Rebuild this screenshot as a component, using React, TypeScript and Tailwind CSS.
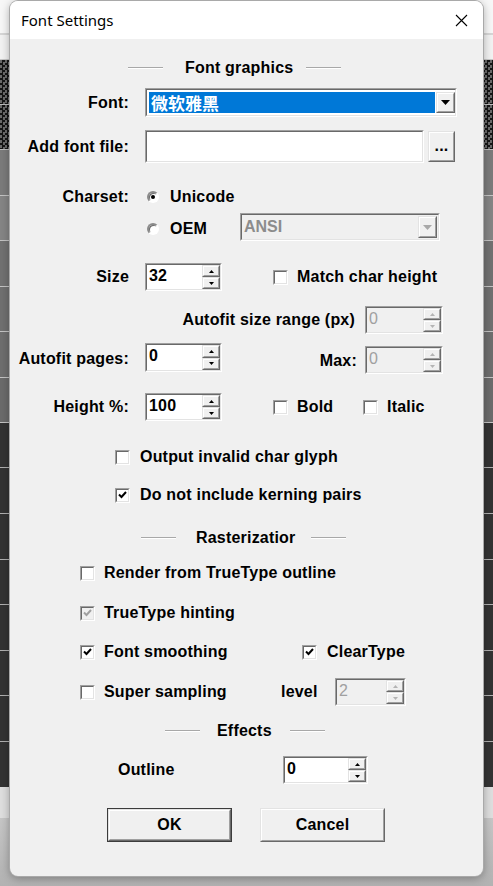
import React from 'react';

const txt = "font-['Liberation_Sans',Arial,sans-serif] font-bold text-[16px] tracking-[0.2px] text-black leading-none whitespace-nowrap";

type Box = { className?: string; inner?: string; children?: React.ReactNode };

function Sunken({ className = '', inner = '', children }: Box) {
  return (
    <div className={`shrink-0 border border-t-[#a0a0a0] border-l-[#a0a0a0] border-b-white border-r-white ${className}`}>
      <div className={`h-full w-full border border-t-[#696969] border-l-[#696969] border-b-[#e3e3e3] border-r-[#e3e3e3] ${inner}`}>
        {children}
      </div>
    </div>
  );
}

function Raised({ className = '', inner = '', children }: Box) {
  return (
    <div className={`shrink-0 border border-t-[#e3e3e3] border-l-[#e3e3e3] border-b-[#696969] border-r-[#696969] bg-[#f0f0f0] ${className}`}>
      <div className={`flex h-full w-full items-center justify-center border border-t-white border-l-white border-b-[#a0a0a0] border-r-[#a0a0a0] ${inner}`}>
        {children}
      </div>
    </div>
  );
}

function Tri({ up = false, big = false, color = '#000' }: { up?: boolean; big?: boolean; color?: string }) {
  if (big) {
    return (
      <svg width="9" height="5" viewBox="0 0 9 5">
        <path d="M0 0 H9 L4.5 5 Z" fill={color} />
      </svg>
    );
  }
  return (
    <svg width="5" height="3" viewBox="0 0 5 3">
      <path d={up ? 'M2.5 0 L5 3 H0 Z' : 'M0 0 H5 L2.5 3 Z'} fill={color} />
    </svg>
  );
}

function Spin({ value, w, h = 'h-[28px]', disabled = false, extra = '' }: { value: string; w: string; h?: string; disabled?: boolean; extra?: string }) {
  const arrow = disabled ? '#b4b4b4' : '#000';
  return (
    <Sunken className={`${w} ${h} ${extra}`} inner={`flex ${disabled ? 'bg-[#f0f0f0]' : 'bg-white'}`}>
      <span
        className={`flex-1 pl-[2px] pt-[3px] ${
          disabled
            ? "font-['Liberation_Sans',Arial,sans-serif] text-[16px] text-[#a0a0a0] leading-none"
            : txt
        }`}
      >
        {value}
      </span>
      <div className="flex w-[18px] flex-col">
        <Raised className="flex-1">
          <Tri up color={arrow} />
        </Raised>
        <Raised className="flex-1">
          <Tri color={arrow} />
        </Raised>
      </div>
    </Sunken>
  );
}

function Check({ checked = false, disabled = false }: { checked?: boolean; disabled?: boolean }) {
  return (
    <Sunken className="h-[15px] w-[15px]" inner={`flex items-center justify-center ${disabled ? 'bg-[#f0f0f0]' : 'bg-white'}`}>
      {checked && (
        <svg width="9" height="8" viewBox="0 0 9 8">
          <path d="M1 3.5 L3.5 6 L8 1" fill="none" stroke={disabled ? '#a0a0a0' : '#000'} strokeWidth="2" />
        </svg>
      )}
    </Sunken>
  );
}

function Radio({ on = false }: { on?: boolean }) {
  return (
    <div className="flex h-[12px] w-[12px] shrink-0 items-center justify-center rounded-full border-2 border-t-[#8a8a8a] border-l-[#8a8a8a] border-b-white border-r-white bg-white shadow-[inset_1px_1px_0_#6a6a6a]">
      {on && <div className="h-[4px] w-[4px] rounded-full bg-black" />}
    </div>
  );
}

function Etch({ className = '' }: { className?: string }) {
  return <div className={`h-[2px] w-[35px] shrink-0 border-t border-t-[#a8a8a8] border-b border-b-white ${className}`} />;
}

const stripes = [
  'h-[33px] bg-[#f7f7f7]',
  'h-[2px] bg-[#d6d6d6]',
  'h-[24px] bg-[#f2f2f2]',
  'h-[1px] bg-[#c8c8c8]',
  'h-[44px] bg-[#3a3a3a] bg-[repeating-conic-gradient(#151515_0_25%,#6a6a6a_0_50%)] bg-[length:5px_5px]',
  'h-[1px] bg-[#bdbdbd]',
  'h-[44px] bg-[#3a3a3a] bg-[repeating-conic-gradient(#151515_0_25%,#6a6a6a_0_50%)] bg-[length:5px_5px]',
  'h-[1px] bg-[#bdbdbd]',
  'h-[45px] bg-[#7b7b7b]',
  'h-[1px] bg-[#c4c4c4]',
  'h-[44px] bg-[#858585]',
  'h-[1px] bg-[#c4c4c4]',
  'h-[45px] bg-[#717171]',
  'h-[1px] bg-[#c4c4c4]',
  'h-[44px] bg-[#707070]',
  'h-[1px] bg-[#c4c4c4]',
  'h-[45px] bg-[#6e6e6e]',
  'h-[1px] bg-[#c4c4c4]',
  'h-[44px] bg-[#6b6b6b]',
  'h-[1px] bg-[#c4c4c4]',
  'h-[44px] bg-[#333333]',
  'h-[1px] bg-[#b0b0b0]',
  'h-[45px] bg-[#333333]',
  'h-[1px] bg-[#b0b0b0]',
  'h-[45px] bg-[#333333]',
  'h-[1px] bg-[#b0b0b0]',
  'h-[44px] bg-[#333333]',
  'h-[1px] bg-[#b0b0b0]',
  'h-[45px] bg-[#333333]',
  'h-[1px] bg-[#b0b0b0]',
  'h-[44px] bg-[#333333]',
  'h-[1px] bg-[#b0b0b0]',
  'h-[45px] bg-[#333333]',
  'h-[1px] bg-[#b0b0b0]',
  'h-[45px] bg-[#333333]',
  'h-[31px] bg-[#dedede]',
  'flex-1 bg-gradient-to-b from-[#c6c6c6] to-[#b2b2b2]',
];

export default function App() {
  return (
    <div className="relative h-[886px] w-[493px] overflow-hidden">
      {/* window behind the dialog */}
      <div className="flex h-full w-full flex-col">
        {stripes.map((s, i) => (
          <div key={i} className={`w-full shrink-0 ${s}`} />
        ))}
      </div>

      {/* dialog */}
      <div className="absolute left-[10px] top-[1px] flex h-[875px] w-[473px] flex-col overflow-hidden rounded-[8px] bg-[#f0f0f0] shadow-[0_0_0_1px_#a9a9a9,0_2px_10px_rgba(0,0,0,0.35)]">
        <div className="flex h-[38px] shrink-0 items-center justify-between bg-white pl-[11px] pr-[15px]">
          <span className="font-['Noto_Sans',sans-serif] text-[15px] text-black">Font Settings</span>
          <svg width="13" height="13" viewBox="0 0 13 13">
            <path d="M1 1 L12 12 M12 1 L1 12" stroke="#000" strokeWidth="1.1" />
          </svg>
        </div>

        <div className="flex flex-col">
          {/* Font graphics */}
          <div className="mt-[19px] flex h-[20px] items-center pl-[118px]">
            <Etch />
            <span className={`ml-[22px] ${txt}`}>Font graphics</span>
            <Etch className="ml-[13px]" />
          </div>

          {/* Font */}
          <div className="mt-[10px] flex h-[29px] items-center">
            <span className={`w-[119px] text-right ${txt}`}>Font:</span>
            <Sunken className="ml-4 h-[29px] w-[312px]" inner="flex bg-white p-[2px] pr-0">
              <div className="flex flex-1 items-center bg-[#0078d7] pl-[2px]">
                <span className="font-['Noto_Sans_CJK_SC',sans-serif] text-[17px] font-bold leading-none text-white">微软雅黑</span>
              </div>
              <Raised className="ml-[1px] w-[19px]">
                <Tri big />
              </Raised>
            </Sunken>
          </div>

          {/* Add font file */}
          <div className="mt-[13px] flex h-[33px] items-center">
            <span className={`w-[119px] text-right ${txt}`}>Add font file:</span>
            <Sunken className="ml-4 h-[33px] w-[279px]" inner="bg-white" />
            <Raised className="ml-[4px] h-[31px] w-[27px]" inner="items-end pb-[6px]">
              <span className={txt}>...</span>
            </Raised>
          </div>

          {/* Charset */}
          <div className="mt-[24px] flex h-[20px] items-center">
            <span className={`w-[119px] text-right ${txt}`}>Charset:</span>
            <div className="ml-[18px]">
              <Radio on />
            </div>
            <span className={`ml-[11px] ${txt}`}>Unicode</span>
          </div>

          <div className="mt-[6px] flex h-[28px] items-center pl-[137px]">
            <div className="mt-[3px]">
              <Radio />
            </div>
            <span className={`ml-[11px] mt-[3px] w-[70px] ${txt}`}>OEM</span>
            <Sunken className="h-[28px] w-[200px]" inner="flex bg-[#f0f0f0] pl-[2px]">
              <span className="flex flex-1 items-center font-['Liberation_Sans',Arial,sans-serif] text-[16px] font-bold leading-none text-[#8c8c8c]">
                ANSI
              </span>
              <Raised className="my-[1px] mr-[1px] w-[19px]">
                <Tri big color="#a8a8a8" />
              </Raised>
            </Sunken>
          </div>

          {/* Size */}
          <div className="mt-[22px] flex h-[28px] items-center">
            <span className={`w-[119px] text-right ${txt}`}>Size</span>
            <Spin value="32" w="w-[77px]" extra="ml-4" />
            <div className="ml-[51px]">
              <Check />
            </div>
            <span className={`ml-[9px] ${txt}`}>Match char height</span>
          </div>

          {/* Autofit size range */}
          <div className="mt-[15px] flex h-[28px] items-center">
            <span className={`w-[345px] text-right ${txt}`}>Autofit size range (px)</span>
            <Spin value="0" w="w-[78px]" disabled extra="ml-[10px]" />
          </div>

          {/* Autofit pages / Max */}
          <div className="mt-[9px] flex h-[31px] items-start">
            <span className={`mt-[8px] w-[119px] text-right ${txt}`}>Autofit pages:</span>
            <Spin value="0" w="w-[77px]" h="h-[29px]" extra="ml-4" />
            <span className={`mt-[10px] w-[135px] text-right ${txt}`}>Max:</span>
            <Spin value="0" w="w-[78px]" disabled extra="ml-[8px] mt-[3px]" />
          </div>

          {/* Height % */}
          <div className="mt-[19px] flex h-[28px] items-center">
            <span className={`w-[119px] text-right ${txt}`}>Height %:</span>
            <Spin value="100" w="w-[77px]" extra="ml-4" />
            <div className="ml-[51px]">
              <Check />
            </div>
            <span className={`ml-[9px] w-[66px] ${txt}`}>Bold</span>
            <Check />
            <span className={`ml-[9px] ${txt}`}>Italic</span>
          </div>

          {/* Output invalid */}
          <div className="mt-[26px] flex h-[20px] items-center pl-[105px]">
            <Check />
            <span className={`ml-[10px] ${txt}`}>Output invalid char glyph</span>
          </div>

          <div className="mt-[18px] flex h-[20px] items-center pl-[105px]">
            <Check checked />
            <span className={`ml-[10px] ${txt}`}>Do not include kerning pairs</span>
          </div>

          {/* Rasterization */}
          <div className="mt-[23px] flex h-[20px] items-center pl-[131px]">
            <Etch />
            <span className={`ml-[20px] ${txt}`}>Rasterizatior</span>
            <Etch className="ml-[15px]" />
          </div>

          <div className="mt-[15px] flex h-[20px] items-center pl-[70px]">
            <Check />
            <span className={`ml-[9px] ${txt}`}>Render from TrueType outline</span>
          </div>

          <div className="mt-[20px] flex h-[20px] items-center pl-[70px]">
            <Check checked disabled />
            <span className={`ml-[9px] ${txt} text-[#a0a0a0]`}>TrueType hinting</span>
          </div>

          <div className="mt-[19px] flex h-[20px] items-center pl-[70px]">
            <Check checked />
            <span className={`ml-[9px] w-[198px] ${txt}`}>Font smoothing</span>
            <Check checked />
            <span className={`ml-[10px] ${txt}`}>ClearType</span>
          </div>

          <div className="mt-[16px] flex h-[28px] items-center pl-[70px]">
            <Check />
            <span className={`ml-[9px] w-[177px] ${txt}`}>Super sampling</span>
            <span className={`w-[54px] ${txt}`}>level</span>
            <Spin value="2" w="w-[71px]" disabled />
          </div>

          {/* Effects */}
          <div className="mt-[15px] flex h-[20px] items-center pl-[155px]">
            <Etch />
            <span className={`ml-[17px] ${txt}`}>Effects</span>
            <Etch className="ml-[18px]" />
          </div>

          <div className="mt-[15px] flex h-[28px] items-center pl-[108px]">
            <span className={`w-[165px] ${txt}`}>Outline</span>
            <Spin value="0" w="w-[85px]" />
          </div>

          {/* Buttons */}
          <div className="mt-[24px] flex h-[34px] items-center pl-[97px]">
            <div className="h-[34px] w-[125px] border border-[#3c3c3c]">
              <Raised className="h-full w-full">
                <span className={txt}>OK</span>
              </Raised>
            </div>
            <Raised className="ml-[28px] h-[34px] w-[125px]">
              <span className={txt}>Cancel</span>
            </Raised>
          </div>
        </div>
      </div>
    </div>
  );
}
